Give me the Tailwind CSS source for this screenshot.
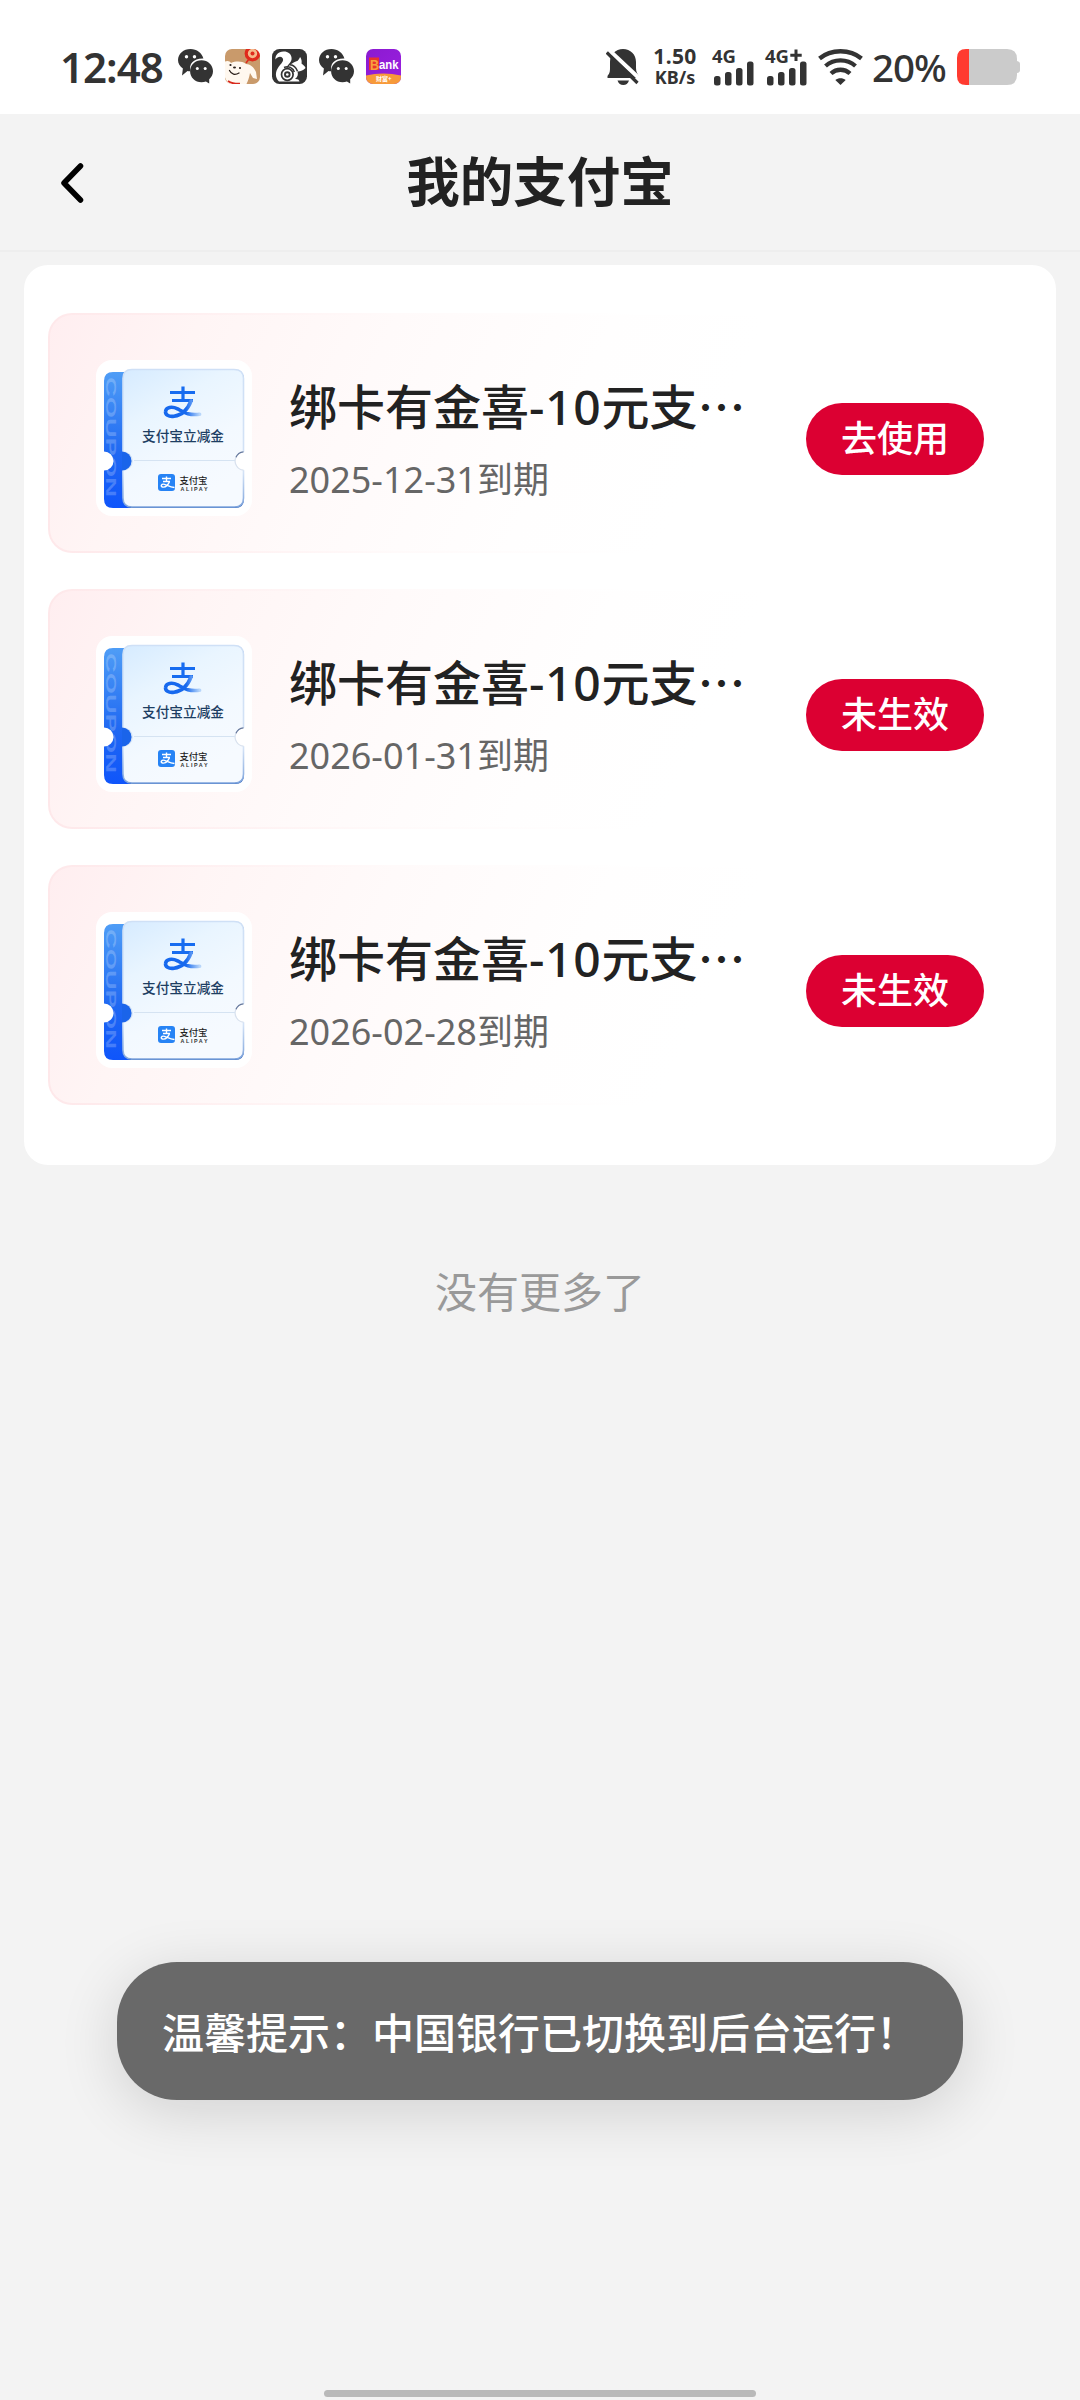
<!DOCTYPE html>
<html lang="zh-CN">
<head>
<meta charset="utf-8">
<title>我的支付宝</title>
<script src="https://cdn.jsdelivr.net/npm/@tailwindcss/browser@4"></script>
</head>
<body class="w-[1080px] h-[2400px] overflow-hidden bg-[#f3f3f3] font-['Noto_Sans','Noto_Sans_CJK_SC',sans-serif] text-[#222]">

<svg class="absolute w-0 h-0" aria-hidden="true">
  <defs>
    <linearGradient id="spine" x1="0" y1="0" x2="0" y2="1"><stop offset="0" stop-color="#4f9df6"/><stop offset=".6" stop-color="#1f68f2"/><stop offset="1" stop-color="#0f55fb"/></linearGradient>
    <linearGradient id="face" x1="0" y1="0" x2=".5" y2="1"><stop offset="0" stop-color="#d6ebff"/><stop offset=".35" stop-color="#e9f5ff"/><stop offset=".7" stop-color="#f3f9ff"/><stop offset="1" stop-color="#f6faff"/></linearGradient>
    <linearGradient id="edge" x1="0" y1="0" x2="0" y2="1"><stop offset="0" stop-color="#cfe0f6"/><stop offset=".75" stop-color="#d3e2f6"/><stop offset="1" stop-color="#7ea4dc"/></linearGradient>
    <linearGradient id="tail" x1="0" y1="0" x2="1" y2="0"><stop offset="0" stop-color="#1769ee"/><stop offset=".6" stop-color="#1769ee"/><stop offset="1" stop-color="#b8d6fa"/></linearGradient>
    <linearGradient id="bank" x1="0" y1="0" x2="1" y2="1"><stop offset="0" stop-color="#8b1ad0"/><stop offset="1" stop-color="#9a20e0"/></linearGradient>
    <symbol id="wechat" viewBox="0 0 35 35">
      <path fill="#333" d="M12.500 0C5.500 0 0 4.800 0 11c0 3.500 1.900 6.500 4.900 8.500L4 26.500l5.500-4.500c1.200.3 2.300.3 3 .2C10.500 15 15.500 9.300 25.400 9.600 24 4 18.800 0 12.500 0z"/>
      <path fill="#333" d="M23.500 11.200c-6.400 0-11.400 4.900-11.400 11s5 11.100 11.400 11.100c1.600 0 3.100-.3 4.400-.8l3.300 2v-4.300c2.300-2 3.800-4.800 3.800-8 0-6.100-5.100-11-11.500-11z"/>
      <g fill="#fff"><circle cx="8.500" cy="7.700" r="1.700"/><circle cx="16.500" cy="7.700" r="1.700"/><circle cx="19.300" cy="19.600" r="1.500"/><circle cx="27.200" cy="19.600" r="1.500"/></g>
    </symbol>
    <symbol id="coupon" viewBox="0 0 156 156">
      <rect width="156" height="156" rx="16" fill="#fff"/>
      <path fill="url(#spine)" d="M8 21q0-9 9-9h18v136H17q-9 0-9-9v-29a9.500 9.500 0 0 0 0-18z"/>
      <text transform="translate(9.500 17) rotate(90)" font-family="Liberation Sans" font-weight="700" font-size="14" textLength="120" lengthAdjust="spacingAndGlyphs" fill="#fff" fill-opacity=".22">COUPON</text>
      <path fill="#fff" d="M7 91.500h1a9.500 9.500 0 0 1 0 19H7z"/>
      <path fill="#2d62ba" d="M37 10.600h102q9 0 9 9V139q0 9-9 9H37q-9 0-9-9v-29a9 9 0 0 0 0-17V20q0-9.400 9-9.400z"/>
      <path fill="url(#face)" stroke="url(#edge)" stroke-width="1.600" d="M36 9.500h102q9.500 0 9.500 9V138q0 9-9 9H36q-9 0-9-9v-28a9 9 0 0 0 0-18V18.500q0-9 9-9z"/>
      <circle cx="148.500" cy="101" r="9.300" fill="#fff"/>
      <path fill="none" stroke="#64779c" stroke-width="1.200" d="M147.500 91.800A9.300 9.300 0 0 0 139.800 97.500"/>
      <path fill="none" stroke="#d8e1ee" stroke-width="1.200" d="M139.800 97.500A9.300 9.300 0 0 0 147.500 110.200"/>
      <path fill="#1a64ea" d="M26 91.500a9.300 9.300 0 0 1 0 19z"/>
      <path stroke="#d5e3f2" stroke-width="1" d="M38 100.500h101"/>
      <g fill="none" stroke-linecap="round" stroke-linejoin="round">
        <path stroke="#176cf0" stroke-width="3.200" stroke-linecap="butt" d="M74 32.500h25M87 26.500v14M76 40.500h21"/>
        <path stroke="url(#tail)" stroke-width="3.600" d="M95 41c-3 8-9 14-17 15.200-5.500.8-9-1.700-8.400-5 .6-3.800 6-5.500 12-2.300 7 3.800 11 6.600 22 5.400"/>
      </g>
      <text x="46" y="81" font-family="Noto Sans CJK SC" font-weight="500" font-size="13.700" textLength="82" fill="#1d3e63">支付宝立减金</text>
      <rect x="62" y="114" width="17" height="17" rx="3" fill="#2683f5"/>
      <g fill="none" stroke="#fff" stroke-width="1.400"><path d="M66 118.500h9M70.500 116.500v5M67 121.500h7"/><path d="M73.500 121.500c-1.500 4-4 6-7 5.500-2.500-.8-1-3.600 2-2.700 3 .9 5 3 10 3.200"/></g>
      <text x="83.500" y="124" font-family="Noto Sans CJK SC" font-weight="500" font-size="9.400" textLength="28" fill="#222">支付宝</text>
      <text x="84.500" y="130.500" font-family="Liberation Sans" font-weight="700" font-size="5.400" textLength="27" fill="#333">ALIPAY</text>
    </symbol>
  </defs>
</svg>

<div class="flex flex-col h-full relative">
  <!-- status bar -->
  <div class="h-[114px] shrink-0 bg-white flex items-center pl-[60px] pr-[60px] pt-[19px] text-[#333]">
    <div class="w-[118px] shrink-0 text-[42px] leading-[40px] font-semibold tracking-[-1px] whitespace-nowrap">12:48</div>
    <div class="flex gap-[12px]">
      <svg class="size-[35px]"><use href="#wechat"/></svg>
      <svg class="size-[35px]" viewBox="0 0 35 35">
        <clipPath id="jd"><rect width="35" height="35" rx="7"/></clipPath>
        <g clip-path="url(#jd)">
          <rect width="35" height="35" fill="#c99a6b"/>
          <path fill="#fff8ef" d="M-1 13c3-2 6-1 7 1 5-2 11-2 15 1 4 0 8 3 10 8l1 7-4-1-3-5c-1 5-2 8-4 12H4L-1 27z"/>
          <circle cx="27.500" cy="4.500" r="6.300" fill="#f5b98a" stroke="#e02a1c" stroke-width="3.200"/>
          <circle cx="27.500" cy="4.500" r="2" fill="#e02a1c"/>
          <path stroke="#e02a1c" stroke-width="1.600" d="M24 10l-3 4"/>
          <path fill="none" stroke="#2b211c" stroke-width="1.300" stroke-linecap="round" d="M4.500 21.500c2 4 5.500 5 9.500 2.500"/>
          <circle cx="5.500" cy="16" r="1.100" fill="#2b211c"/><circle cx="15" cy="19" r="1.100" fill="#2b211c"/><ellipse cx="9.500" cy="18.600" rx="1.500" ry="1" fill="#2b211c"/>
          <path fill="none" stroke="#d8281c" stroke-width="2" d="M3 32c3 2 7 3 12 2.800"/>
        </g>
      </svg>
      <svg class="size-[35px]" viewBox="0 0 35 35">
        <rect width="35" height="35" rx="7.500" fill="#333"/>
        <path fill="#fff" d="M7 32.500h20.500c-.5-2-2-2.700-4.500-2.500 2.500-2 3.500-4.500 2.500-7.500 3.500-.2 6-1 8-3.500-.7-2-2.500-3.400-4-4.500.5-2 0-4.500-1.400-6.500-.7 1.400-1.200 2.500-2.400 3.800-5 1.400-9.200 5-11.700 9.200.5-6 6-6.700 5.600-12C19.300 4.500 15.500 2.300 11.500 2.500 6 2.800 3 6.500 3.500 10.500c2-3 5.500-3.500 7-1.500 2 3-1.500 5.500-4 9C3 23 3 28.500 7 32.500z"/>
        <circle cx="15.300" cy="25.500" r="5.800" fill="#fff" stroke="#333" stroke-width="1.700"/>
        <circle cx="15.300" cy="25.500" r="2.300" fill="none" stroke="#333" stroke-width="1.900"/>
        <path fill="none" stroke="#333" stroke-width="1.500" d="M12 18.500c4.500-2 9 .3 10.300 4.500M18 15.800c3.500.3 6 2.500 7.500 6.500"/>
      </svg>
      <svg class="size-[35px]"><use href="#wechat"/></svg>
      <svg class="size-[35px]" viewBox="0 0 35 35">
        <clipPath id="bk"><rect width="35" height="35" rx="7"/></clipPath>
        <g clip-path="url(#bk)">
          <rect width="35" height="35" fill="url(#bank)"/>
          <path fill="#f79a3a" d="M0 26.500Q17 22.500 35 26.500V35H0z"/>
          <rect x="3" y="8.500" width="10" height="12.500" fill="#e9342f"/>
          <text x="4" y="20.500" font-family="Liberation Sans" font-weight="700" font-size="15" textLength="9" lengthAdjust="spacingAndGlyphs" fill="#f8a13c">B</text>
          <text x="13" y="20" font-family="Liberation Sans" font-weight="700" font-size="13.500" textLength="19.500" lengthAdjust="spacingAndGlyphs" fill="#fff">ank</text>
          <text x="10" y="32" font-family="Noto Sans CJK SC" font-weight="700" font-size="6" fill="#fff">财富+</text>
        </g>
      </svg>
    </div>
    <div class="ml-auto flex items-center">
      <svg class="w-[34px] h-[36px]" viewBox="0 0 34 36">
        <path fill="#333" d="M17 0c7.500 0 13 5.500 13 13v6c0 4 1.500 6 3 8v2H1.500v-2C3.500 24.500 4 23 4 19v-6C4 5.500 9.500 0 17 0zM11.500 31.500h11.500c-1 3-3 4.500-5.700 4.500s-4.800-1.500-5.800-4.500z"/>
        <path stroke="#fff" stroke-width="4" d="M3.500 1.500L34 30"/>
        <path stroke="#333" stroke-width="3.200" d="M.8 3.500L31.500 34"/>
      </svg>
      <div class="ml-[11px] w-[48px] flex flex-col items-center font-bold whitespace-nowrap">
        <span class="text-[21px] leading-[21px] tracking-[0.4px]">1.50</span>
        <span class="text-[18px] leading-[21px]">KB/s</span>
      </div>
      <svg class="ml-[13px] w-[44px] h-[38px] overflow-visible" viewBox="0 0 44 38" fill="#333">
        <text x="0" y="15" font-family="Noto Sans" font-weight="700" font-size="18.500" textLength="24" lengthAdjust="spacingAndGlyphs">4G</text>
        <rect x="2" y="28" width="6.500" height="9.500" rx="2.500"/><rect x="13" y="24" width="6.500" height="13.500" rx="2.500"/><rect x="24" y="20" width="6.500" height="17.500" rx="2.500"/><rect x="35" y="13.500" width="6.500" height="24" rx="2.500"/>
      </svg>
      <svg class="ml-[9px] w-[44px] h-[38px] overflow-visible" viewBox="0 0 44 38" fill="#333">
        <text x="0" y="15" font-family="Noto Sans" font-weight="700" font-size="18.500" textLength="24" lengthAdjust="spacingAndGlyphs">4G</text>
        <path d="M29.500 1.500h3v4.200h4.200v3h-4.200v4.200h-3V8.700h-4.200v-3h4.200z"/>
        <rect x="2" y="28" width="6.500" height="9.500" rx="2.500"/><rect x="13" y="24" width="6.500" height="13.500" rx="2.500"/><rect x="24" y="20" width="6.500" height="17.500" rx="2.500"/><rect x="35" y="13.500" width="6.500" height="24" rx="2.500"/>
      </svg>
      <svg class="ml-[9px] w-[45px] h-[36px]" viewBox="0 0 45 36" fill="none" stroke="#333" stroke-width="4.300">
        <path d="M1.500 9.500C13-.2 32-.2 43.500 9.500M7.500 17c8.500-7.500 21.500-7.500 30 0M13 24.500c5.500-5 13.500-5 19 0"/>
        <path fill="#333" stroke="none" d="M17.300 31c3-2.300 7.400-2.300 10.400 0l-5.200 5z"/>
      </svg>
      <div class="ml-[9px] w-[85px] text-[38.500px] leading-[40px] tracking-[-1px] font-medium whitespace-nowrap">20%</div>
      <svg class="w-[63px] h-[36px]" viewBox="0 0 63 36">
        <path fill="#cbcbcb" d="M12 0h38q10 0 10 10v2q3 .5 3 3v6q0 2.500-3 3v2q0 10-10 10H12z"/>
        <path fill="#ff3b30" d="M12 0H9Q0 0 0 9v18q0 9 9 9h3z"/>
      </svg>
    </div>
  </div>

  <!-- header -->
  <div class="h-[138px] shrink-0 border-b-2 border-[#eeeeee] flex items-center px-[59px]">
    <svg class="w-[26px] h-[42px]" viewBox="0 0 26 42"><path d="M21.500 5L5 22 21.500 39" fill="none" stroke="#000" stroke-width="5.500" stroke-linecap="round" stroke-linejoin="round"/></svg>
    <h1 class="flex-1 text-center pr-[26px] text-[53.5px] leading-[60px] font-bold">我的支付宝</h1>
  </div>

  <!-- coupon list -->
  <div class="mx-6 mt-[13px] h-[900px] shrink-0 rounded-[24px] bg-white px-6 pt-12 flex flex-col gap-9" id="list"></div>

  <p class="mt-[97px] text-center text-[42px] leading-[60px] text-[#999]">没有更多了</p>

  <!-- toast -->
  <div class="absolute left-[117px] top-[1962px] w-[846px] h-[138px] rounded-[60px] bg-[#696969] shadow-[0_12px_60px_rgba(0,0,0,0.14)] flex items-center justify-center text-white text-[42px] leading-[60px] font-medium whitespace-nowrap font-['Noto_Sans_CJK_SC',sans-serif]">温馨提示：中国银行已切换到后台运行！</div>
  <div class="absolute left-[324px] top-[2390px] w-[432px] h-[7px] rounded-full bg-[#b9b9b9]"></div>
</div>

<template id="row">
  <div class="h-[240px] shrink-0 rounded-[24px] bg-linear-to-r from-[#fee8ea] via-[#fffafa] via-35% to-white to-60% p-[2px]">
    <div class="h-full rounded-[22px] bg-[linear-gradient(115deg,#ffeef0_0%,#fff5f5_14%,#fffafa_32%,#fffefe_52%,#ffffff_66%)] flex items-center pl-[46px] pr-[46px]">
      <svg class="size-[156px] shrink-0 mt-[10px]"><use href="#coupon"/></svg>
      <div class="ml-[37px] mt-[10px] w-[480px] flex flex-col">
        <div class="text-[48px] leading-[64px] whitespace-nowrap font-medium">绑卡有金喜<span class="tracking-[0.7px]">-10</span>元支<span class="font-['Noto_Sans_CJK_SC']">…</span></div>
        <div class="mt-[17px] text-[36px] leading-[48px] text-[#666] whitespace-nowrap" data-date></div>
      </div>
      <button class="ml-auto mt-[12px] w-[178px] h-[72px] rounded-full bg-[#dc0032] text-white text-[36px] leading-[40px] font-medium flex items-center justify-center" data-action></button>
    </div>
  </div>
</template>
<script>
  const list = document.getElementById('list');
  const row = document.getElementById('row');
  [['2025-12-31到期', '去使用'], ['2026-01-31到期', '未生效'], ['2026-02-28到期', '未生效']].forEach(([date, action]) => {
    const item = row.content.cloneNode(true);
    item.querySelector('[data-date]').textContent = date;
    item.querySelector('[data-action]').textContent = action;
    list.appendChild(item);
  });
</script>
</body>
</html>
